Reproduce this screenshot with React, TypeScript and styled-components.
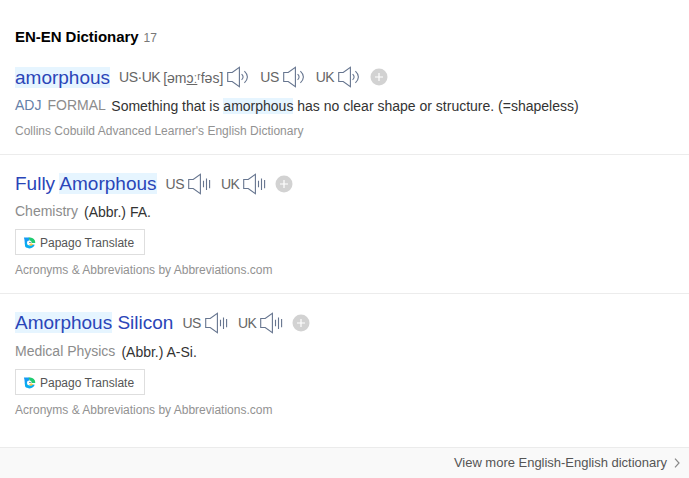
import React from 'react';
import styled, { createGlobalStyle } from 'styled-components';

const GlobalStyle = createGlobalStyle`
  * { box-sizing: border-box; }
  body {
    margin: 0;
    background: #fff;
    font-family: "Liberation Sans", Arial, sans-serif;
    color: #333;
  }
`;

const Page = styled.main`
  display: flex;
  flex-direction: column;
  width: 689px;
  height: 478px;
  overflow: hidden;
  white-space: nowrap;
`;

const Header = styled.header`
  display: flex;
  align-items: baseline;
  gap: 5px;
  height: 48px;
  padding: 28px 0 0 15px;
`;

const Heading = styled.h2`
  margin: 0;
  font-size: 15px;
  line-height: 18px;
  letter-spacing: -0.04px;
  color: #000;
`;

const Count = styled.span`
  font-size: 12px;
  color: #777;
`;

const Entry = styled.article<{ $height: number; $last?: boolean }>`
  display: flex;
  flex-direction: column;
  height: ${(p) => p.$height}px;
  padding: 16px 0 0 15px;
  border-bottom: ${(p) => (p.$last ? 'none' : '1px solid #ececec')};
`;

const TitleRow = styled.div`
  display: flex;
  align-items: center;
  height: 26px;
`;

const Word = styled.a<{ $lift?: boolean }>`
  margin-right: 9px;
  padding-bottom: ${(p) => (p.$lift ? 2 : 0)}px;
  font-size: 19px;
  line-height: 21px;
  color: #2a45b8;
`;

const Mark = styled.mark`
  background: #e6f5ff;
  color: inherit;
`;

const Accent = styled.span<{ $gap: number }>`
  margin-right: ${(p) => p.$gap}px;
  font-size: 14px;
  line-height: 18px;
  letter-spacing: -0.5px;
  color: #666;
`;

const Phonetic = styled(Accent)`
  padding-top: 2px;
  letter-spacing: 0;
`;

const Sound = styled.svg<{ $gap: number }>`
  flex: none;
  width: 23px;
  height: 22px;
  margin-right: ${(p) => p.$gap}px;
  fill: none;
  stroke: #66758f;
`;

const Plus = styled.svg`
  flex: none;
  width: 18px;
  height: 18px;
`;

const Meaning = styled.p<{ $top: number }>`
  display: flex;
  align-items: baseline;
  height: 20px;
  margin: ${(p) => p.$top}px 0 0;
  font-size: 14px;
  line-height: 20px;
`;

const Tag = styled.span<{ $gap: number; $blue?: boolean }>`
  position: relative;
  top: -1px;
  margin-right: ${(p) => p.$gap}px;
  color: ${(p) => (p.$blue ? '#6580a8' : '#8c8c8c')};
`;

const Source = styled.p`
  margin: 7px 0 0;
  font-size: 12px;
  line-height: 16px;
  color: #929292;
`;

const TranslateButton = styled.button`
  display: flex;
  align-items: center;
  gap: 4px;
  width: 130px;
  height: 26px;
  margin: 7px 0 0;
  padding: 1px 0 0 7px;
  border: 1px solid #dedede;
  background: #fff;
  font: 12px "Liberation Sans", Arial, sans-serif;
  color: #555;
`;

const Footer = styled.footer`
  display: flex;
  align-items: center;
  justify-content: flex-end;
  gap: 7px;
  height: 31px;
  margin-top: auto;
  padding: 0 9px 0 0;
  border-top: 1px solid #ebebeb;
  background: #f9f9f9;
  font-size: 13px;
  color: #555;
`;

const MoreLabel = styled.span`
  letter-spacing: -0.015px;
  padding-bottom: 2px;
`;

function Speaker({ gap, bars }: { gap: number; bars?: boolean }) {
  return (
    <Sound $gap={gap} viewBox="0 0 23 22" aria-label="Listen">
      <path d="M.7 6.5H5.2L12.4 1.4V20.6L5.2 15.5H.7Z" strokeWidth="1.1" />
      {bars ? (
        <path d="M15.5 7.8V14.2M18.5 5.5V17M21.6 7V15.2" strokeWidth="1.1" />
      ) : (
        <path d="M14.6 8.2Q17.6 11 14.6 13.8M17.4 5.2Q23.4 11 17.4 16.8" strokeWidth="1.1" />
      )}
    </Sound>
  );
}

function AddIcon() {
  return (
    <Plus viewBox="0 0 18 18" aria-label="Add">
      <circle cx="9" cy="9" r="8.5" fill="#d2d2d2" />
      <path d="M5 9H13M9 5V13" stroke="#fff" strokeWidth="1.2" />
    </Plus>
  );
}

function PapagoIcon() {
  return (
    <svg width="13" height="12" viewBox="0 0 13 12">
      <path d="M.9.6H6.5V6L3.2 10.9Q1.7 9.6 1.8 6.5 1.8 3.3.9.6Z" fill="#159bf3" />
      <path d="M5.5.6H7A5.1 5.1 0 0 1 12.3 6H7.8Z" fill="#20cc70" />
      <path d="M1.8 6.5Q2 11.3 6.6 11.4 10.5 11.2 11.7 7.8L7.6 7.2 4 5Z" fill="#08adf0" />
      <circle cx="6.3" cy="6" r="2.4" fill="#fff" />
      <circle cx="7" cy="5.4" r=".65" fill="#25506f" />
      <path d="M6 7.6 8.2 6.2 10.5 7.4 7.8 9Z" fill="#f5c84d" />
    </svg>
  );
}

function Translate() {
  return (
    <TranslateButton>
      <PapagoIcon />
      <span>Papago Translate</span>
    </TranslateButton>
  );
}

export default function App() {
  return (
    <Page>
      <GlobalStyle />
      <Header>
        <Heading>EN-EN Dictionary</Heading>
        <Count>17</Count>
      </Header>

      <Entry $height={107}>
        <TitleRow>
          <Word><Mark>amorphous</Mark></Word>
          <Accent $gap={3}>US·UK</Accent>
          <Phonetic $gap={4}>[əm<u>ɔː</u>ʳfəs]</Phonetic>
          <Speaker gap={10} />
          <Accent $gap={4}>US</Accent>
          <Speaker gap={10} />
          <Accent $gap={4}>UK</Accent>
          <Speaker gap={9} />
          <AddIcon />
        </TitleRow>
        <Meaning $top={6}>
          <Tag $gap={6} $blue>ADJ</Tag>
          <Tag $gap={5.5}>FORMAL</Tag>
          <span>Something that is <Mark>amorphous</Mark> has no clear shape or structure. (=shapeless)</span>
        </Meaning>
        <Source>Collins Cobuild Advanced Learner's English Dictionary</Source>
      </Entry>

      <Entry $height={139}>
        <TitleRow>
          <Word $lift>Fully <Mark>Amorphous</Mark></Word>
          <Accent $gap={4}>US</Accent>
          <Speaker bars gap={10} />
          <Accent $gap={4}>UK</Accent>
          <Speaker bars gap={9} />
          <AddIcon />
        </TitleRow>
        <Meaning $top={5}>
          <Tag $gap={6}>Chemistry</Tag>
          <span>(Abbr.) FA.</span>
        </Meaning>
        <Translate />
        <Source>Acronyms &amp; Abbreviations by Abbreviations.com</Source>
      </Entry>

      <Entry $height={139} $last>
        <TitleRow>
          <Word $lift><Mark>Amorphous</Mark> Silicon</Word>
          <Accent $gap={4}>US</Accent>
          <Speaker bars gap={10} />
          <Accent $gap={4}>UK</Accent>
          <Speaker bars gap={9} />
          <AddIcon />
        </TitleRow>
        <Meaning $top={6}>
          <Tag $gap={6}>Medical Physics</Tag>
          <span>(Abbr.) A-Si.</span>
        </Meaning>
        <Translate />
        <Source>Acronyms &amp; Abbreviations by Abbreviations.com</Source>
      </Entry>

      <Footer>
        <MoreLabel>View more English-English dictionary</MoreLabel>
        <svg width="6" height="10" viewBox="0 0 6 10" fill="none" stroke="#888">
          <path d="M1 .7 5 5 1 9.3" strokeWidth="1.2" />
        </svg>
      </Footer>
    </Page>
  );
}
